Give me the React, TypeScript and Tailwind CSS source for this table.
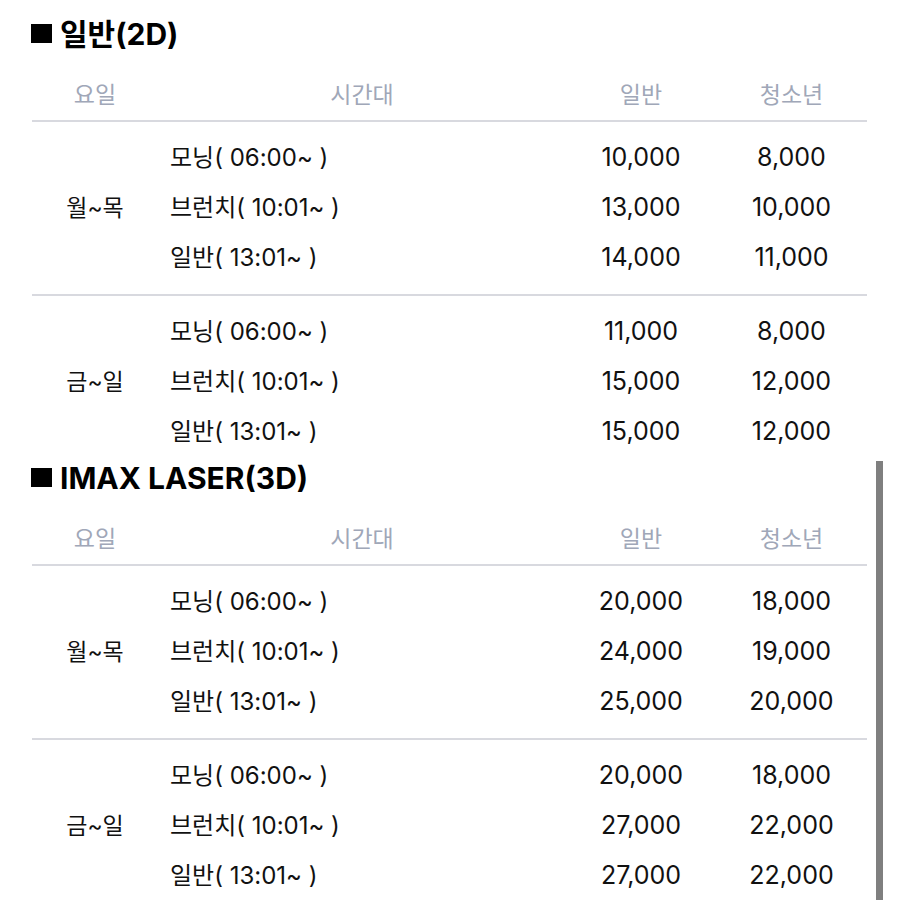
const font = { fontFamily: 'Inter, "Noto Sans CJK KR", sans-serif' };

type Row = { time: string; adult: string; teen: string };
type Group = { day: string; rows: Row[] };
type Section = { title: string; groups: Group[] };

const sections: Section[] = [
  {
    title: "일반(2D)",
    groups: [
      {
        day: "월~목",
        rows: [
          { time: "모닝( 06:00~ )", adult: "10,000", teen: "8,000" },
          { time: "브런치( 10:01~ )", adult: "13,000", teen: "10,000" },
          { time: "일반( 13:01~ )", adult: "14,000", teen: "11,000" },
        ],
      },
      {
        day: "금~일",
        rows: [
          { time: "모닝( 06:00~ )", adult: "11,000", teen: "8,000" },
          { time: "브런치( 10:01~ )", adult: "15,000", teen: "12,000" },
          { time: "일반( 13:01~ )", adult: "15,000", teen: "12,000" },
        ],
      },
    ],
  },
  {
    title: "IMAX LASER(3D)",
    groups: [
      {
        day: "월~목",
        rows: [
          { time: "모닝( 06:00~ )", adult: "20,000", teen: "18,000" },
          { time: "브런치( 10:01~ )", adult: "24,000", teen: "19,000" },
          { time: "일반( 13:01~ )", adult: "25,000", teen: "20,000" },
        ],
      },
      {
        day: "금~일",
        rows: [
          { time: "모닝( 06:00~ )", adult: "20,000", teen: "18,000" },
          { time: "브런치( 10:01~ )", adult: "27,000", teen: "22,000" },
          { time: "일반( 13:01~ )", adult: "27,000", teen: "22,000" },
        ],
      },
    ],
  },
];

function PriceTable({ section }: { section: Section }) {
  return (
    <section>
      <h2 className="h-[41px] flex items-center gap-[8px] pl-[31px] text-[30px] font-bold text-black leading-none">
        <span className="w-[21px] h-[19px] bg-black" />
        <span>{section.title}</span>
      </h2>
      <div className="mt-[16px] ml-[32px] w-[835px]">
        <div className="grid grid-cols-[126px_408px_150px_1fr] h-[52px] border-b-2 border-[#d8d9df] text-[23px] text-[#a0a7b8] items-center text-center">
          <div>요일</div>
          <div>시간대</div>
          <div>일반</div>
          <div>청소년</div>
        </div>
        {section.groups.map((g, gi) => {
          const last = gi === section.groups.length - 1;
          return (
            <div
              key={gi}
              className={
                last
                  ? "grid grid-cols-[126px_1fr] pt-[11px]"
                  : "grid grid-cols-[126px_1fr] py-[11px] border-b-2 border-[#d8d9df]"
              }
            >
              <div className="flex items-center justify-center text-[23px] text-[#111]">{g.day}</div>
              <div>
                {g.rows.map((r, ri) => (
                  <div key={ri} className="grid grid-cols-[408px_150px_1fr] h-[50px] items-center text-[#111]">
                    <div className="pl-[12px] text-[24px]">{r.time}</div>
                    <div className="text-center text-[25px]">{r.adult}</div>
                    <div className="text-center text-[25px]">{r.teen}</div>
                  </div>
                ))}
              </div>
            </div>
          );
        })}
      </div>
    </section>
  );
}

export default function App() {
  return (
    <div className="relative w-[900px] h-[900px] overflow-hidden bg-white pt-[13px]" style={font}>
      {sections.map((s, i) => (
        <PriceTable key={i} section={s} />
      ))}
      <div className="absolute left-[876px] top-[461px] w-[7px] h-[450px] bg-[#7f7f7f]" />
    </div>
  );
}
